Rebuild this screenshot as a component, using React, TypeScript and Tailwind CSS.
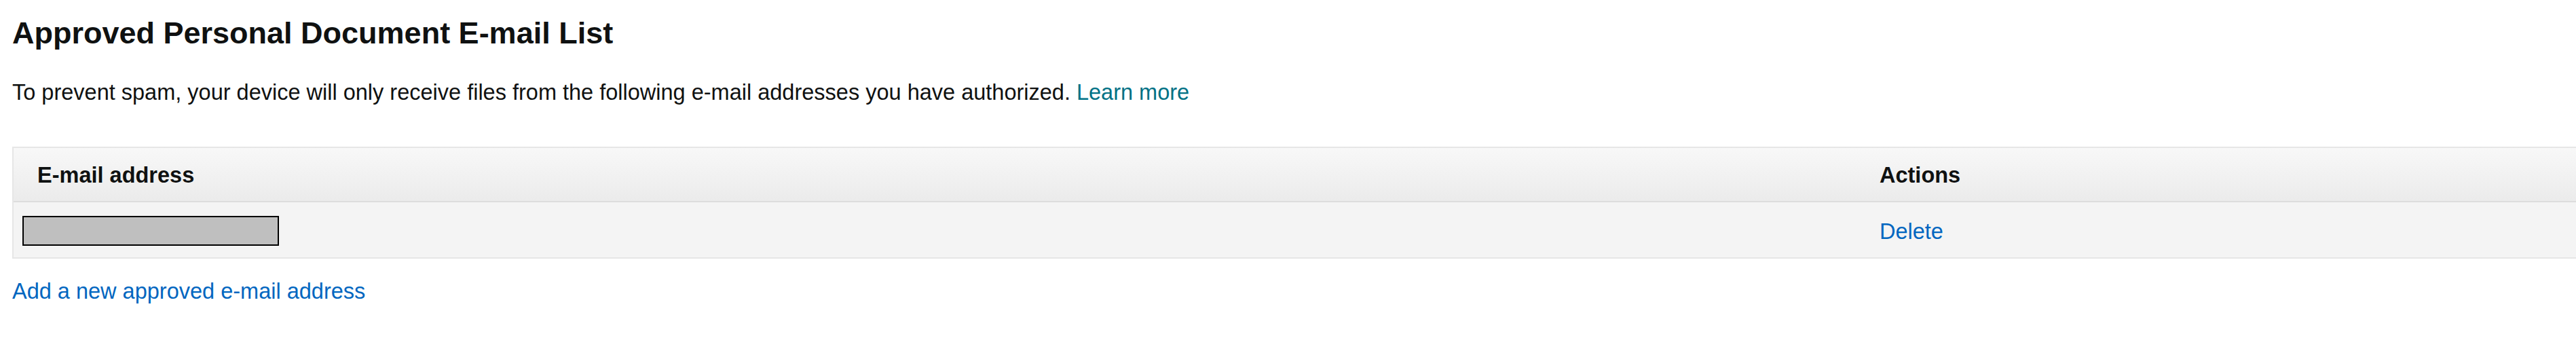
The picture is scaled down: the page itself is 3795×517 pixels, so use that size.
import React from "react";

export default function App() {
  return (
    <div
      className="min-h-[517px] w-full bg-white pl-[18px] text-[#0f1111]"
      style={{ fontFamily: '"Liberation Sans", Arial, sans-serif' }}
    >
      <h1 className="pt-[24px] text-[45px] font-bold leading-[50px]">
        Approved Personal Document E-mail List
      </h1>
      <p className="mt-[44px] text-[32.5px] leading-[36px]">
        To prevent spam, your device will only receive files from the following e-mail addresses you have authorized.{" "}
        <a className="text-[#007185]" href="#">Learn more</a>
      </p>

      <div className="mt-[62px] border-l-2 border-t-2 border-b-2 border-[#e6e6e6]">
        <div className="flex h-[80px] border-b-2 border-[#dddddd] bg-gradient-to-b from-[#f8f8f8] to-[#ebebeb] pt-[22px] text-[32.5px] font-bold leading-[36px]">
          <div className="w-[2714px] pl-[35px]">E-mail address</div>
          <div className="flex-1 pl-[35px]">Actions</div>
        </div>
        <div className="flex h-[81px] bg-[#f4f4f4] text-[32.5px] leading-[36px]">
          <div className="w-[2714px] pl-[13px] pt-[20px]">
            <div className="h-[44px] w-[378px] border-2 border-black bg-[#bfbfbf]" />
          </div>
          <div className="flex-1 pl-[35px] pt-[25px]">
            <a className="text-[#0066c0]" href="#">Delete</a>
          </div>
        </div>
      </div>

      <div className="mt-[30px] text-[32.5px] leading-[36px]">
        <a className="text-[#0066c0]" href="#">Add a new approved e-mail address</a>
      </div>
    </div>
  );
}
